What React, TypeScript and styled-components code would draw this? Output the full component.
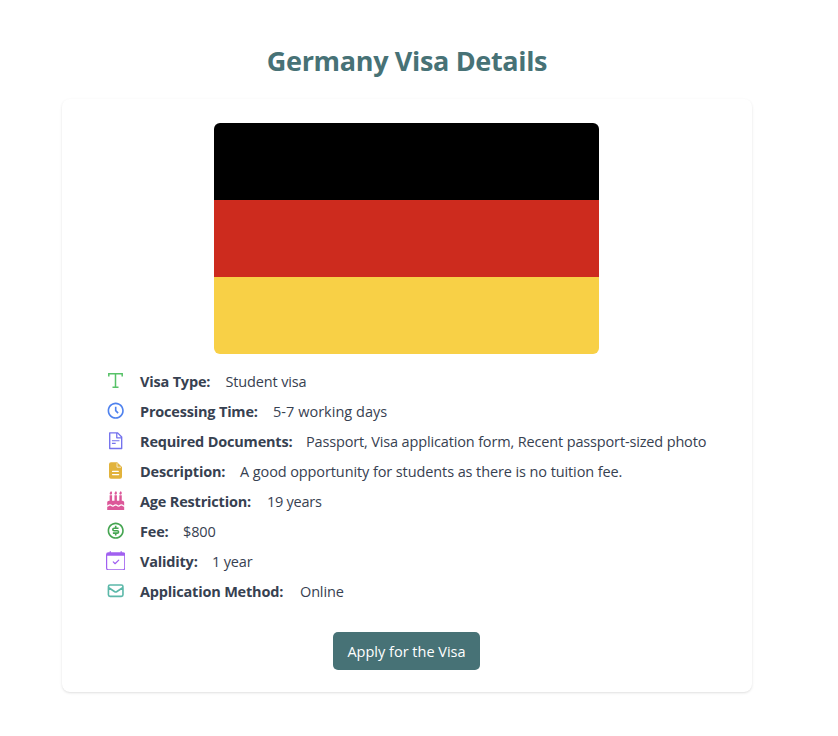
import React from "react";
import styled, { createGlobalStyle } from "styled-components";
import type { IconType } from "react-icons";
import { BsCalendarCheck } from "react-icons/bs";
import { RiMoneyDollarCircleLine } from "react-icons/ri";
import { HiOutlineMail } from "react-icons/hi";
import { AiOutlineFileText } from "react-icons/ai";
import { FaBirthdayCake } from "react-icons/fa";
import { BiTimeFive } from "react-icons/bi";

const GlobalStyle = createGlobalStyle`
  *, *::before, *::after { box-sizing: border-box; }
  body {
    margin: 0;
    background: #fff;
    font-family: "Open Sans", "Noto Sans", sans-serif;
  }
`;

const Page = styled.main`
  width: 814px;
  min-height: 736px;
  padding: 40px 62px 44px;
`;

const Title = styled.h1`
  margin: 0 0 17px;
  height: 42px;
  font-size: 27px;
  line-height: 42px;
  font-weight: 700;
  letter-spacing: -0.34px;
  text-align: center;
  color: #477276;
`;

const Card = styled.section`
  display: flex;
  flex-direction: column;
  align-items: center;
  height: 593px;
  padding: 24px 1px 0 0;
  border-radius: 8px;
  background: #fff;
  box-shadow: 0 1px 3px rgba(0, 0, 0, 0.1), 0 1px 2px -1px rgba(0, 0, 0, 0.1);
`;

const Flag = styled.div`
  display: grid;
  grid-template-rows: repeat(3, 1fr);
  width: 385px;
  height: 231px;
  border-radius: 6px;
  overflow: hidden;
`;

const Stripe = styled.div<{ $color: string }>`
  background: ${(p) => p.$color};
`;

const Details = styled.ul`
  align-self: stretch;
  list-style: none;
  margin: 13px 0 0;
  padding: 0 0 0 44px;
`;

const Row = styled.li`
  display: flex;
  align-items: center;
  height: 30px;
  font-size: 14.5px;
  line-height: 30px;
  color: #374151;
  white-space: nowrap;
`;

const IconBox = styled.span<{ $color: string }>`
  display: flex;
  flex: none;
  width: 19px;
  height: 19px;
  margin: 0 15px 3px 0;
  align-items: center;
  justify-content: center;
  font-size: 19.4px;
  color: ${(p) => p.$color};

  svg {
    flex: none;
  }
`;

const Label = styled.strong<{ $width: number }>`
  flex: none;
  width: ${(p) => p.$width}px;
  font-weight: 700;
  letter-spacing: -0.19px;
`;

const Value = styled.span<{ $tracking?: number }>`
  letter-spacing: ${(p) => p.$tracking ?? -0.15}px;
`;

const ApplyButton = styled.button`
  width: 147px;
  height: 38px;
  margin-top: 25px;
  padding: 2px 0 0;
  border: 0;
  border-radius: 5px;
  background: #477276;
  color: #fff;
  font: 400 14.5px/36px "Open Sans", "Noto Sans", sans-serif;
`;

function TypeIcon() {
  return (
    <svg width="19" height="19" viewBox="0 0 19 19" fill="none" stroke="currentColor" strokeWidth="1.5">
      <path d="M2.8 5.5V2.7h13.4v2.8M9.5 2.7v13.6M6.5 16.3h6" />
    </svg>
  );
}

function DescriptionIcon() {
  return (
    <svg width="19" height="19" viewBox="0 0 19 19" fill="none">
      <path
        fill="currentColor"
        d="M5 1.2h6.2L16 6v9.8a2 2 0 0 1-2 2H5a2 2 0 0 1-2-2V3.2a2 2 0 0 1 2-2z"
      />
      <path stroke="#fff" strokeWidth="0.7" d="M11 2.2v4h4" />
      <path stroke="#fff" strokeWidth="1.4" strokeLinecap="round" d="M6.6 10.4h5.6M6.6 13.6h6" />
    </svg>
  );
}

interface Detail {
  icon: IconType | React.FC;
  color: string;
  label: string;
  labelWidth: number;
  value: string;
  tracking?: number;
}

const details: Detail[] = [
  { icon: TypeIcon, color: "#57c268", label: "Visa Type:", labelWidth: 85.5, value: "Student visa" },
  { icon: BiTimeFive, color: "#4f82ee", label: "Processing Time:", labelWidth: 133, value: "5-7 working days", tracking: 0.03 },
  { icon: AiOutlineFileText, color: "#7472ed", label: "Required Documents:", labelWidth: 166, value: "Passport, Visa application form, Recent passport-sized photo" },
  { icon: DescriptionIcon, color: "#e2b33c", label: "Description:", labelWidth: 100, value: "A good opportunity for students as there is no tuition fee.", tracking: -0.1 },
  { icon: FaBirthdayCake, color: "#dc5799", label: "Age Restriction:", labelWidth: 127, value: "19 years", tracking: -0.25 },
  { icon: RiMoneyDollarCircleLine, color: "#45a551", label: "Fee:", labelWidth: 43, value: "$800" },
  { icon: BsCalendarCheck, color: "#a160f0", label: "Validity:", labelWidth: 72, value: "1 year" },
  { icon: HiOutlineMail, color: "#5cb8a9", label: "Application Method:", labelWidth: 160, value: "Online" },
];

export default function App() {
  return (
    <>
      <GlobalStyle />
      <Page>
        <Title>Germany Visa Details</Title>
        <Card>
          <Flag role="img" aria-label="Flag of Germany">
            <Stripe $color="#000" />
            <Stripe $color="#cd2b1e" />
            <Stripe $color="#f8d046" />
          </Flag>
          <Details>
            {details.map(({ icon: Icon, color, label, labelWidth, value, tracking }) => (
              <Row key={label}>
                <IconBox $color={color}>
                  <Icon />
                </IconBox>
                <Label $width={labelWidth}>{label}</Label>
                <Value $tracking={tracking}>{value}</Value>
              </Row>
            ))}
          </Details>
          <ApplyButton type="button">Apply for the Visa</ApplyButton>
        </Card>
      </Page>
    </>
  );
}
